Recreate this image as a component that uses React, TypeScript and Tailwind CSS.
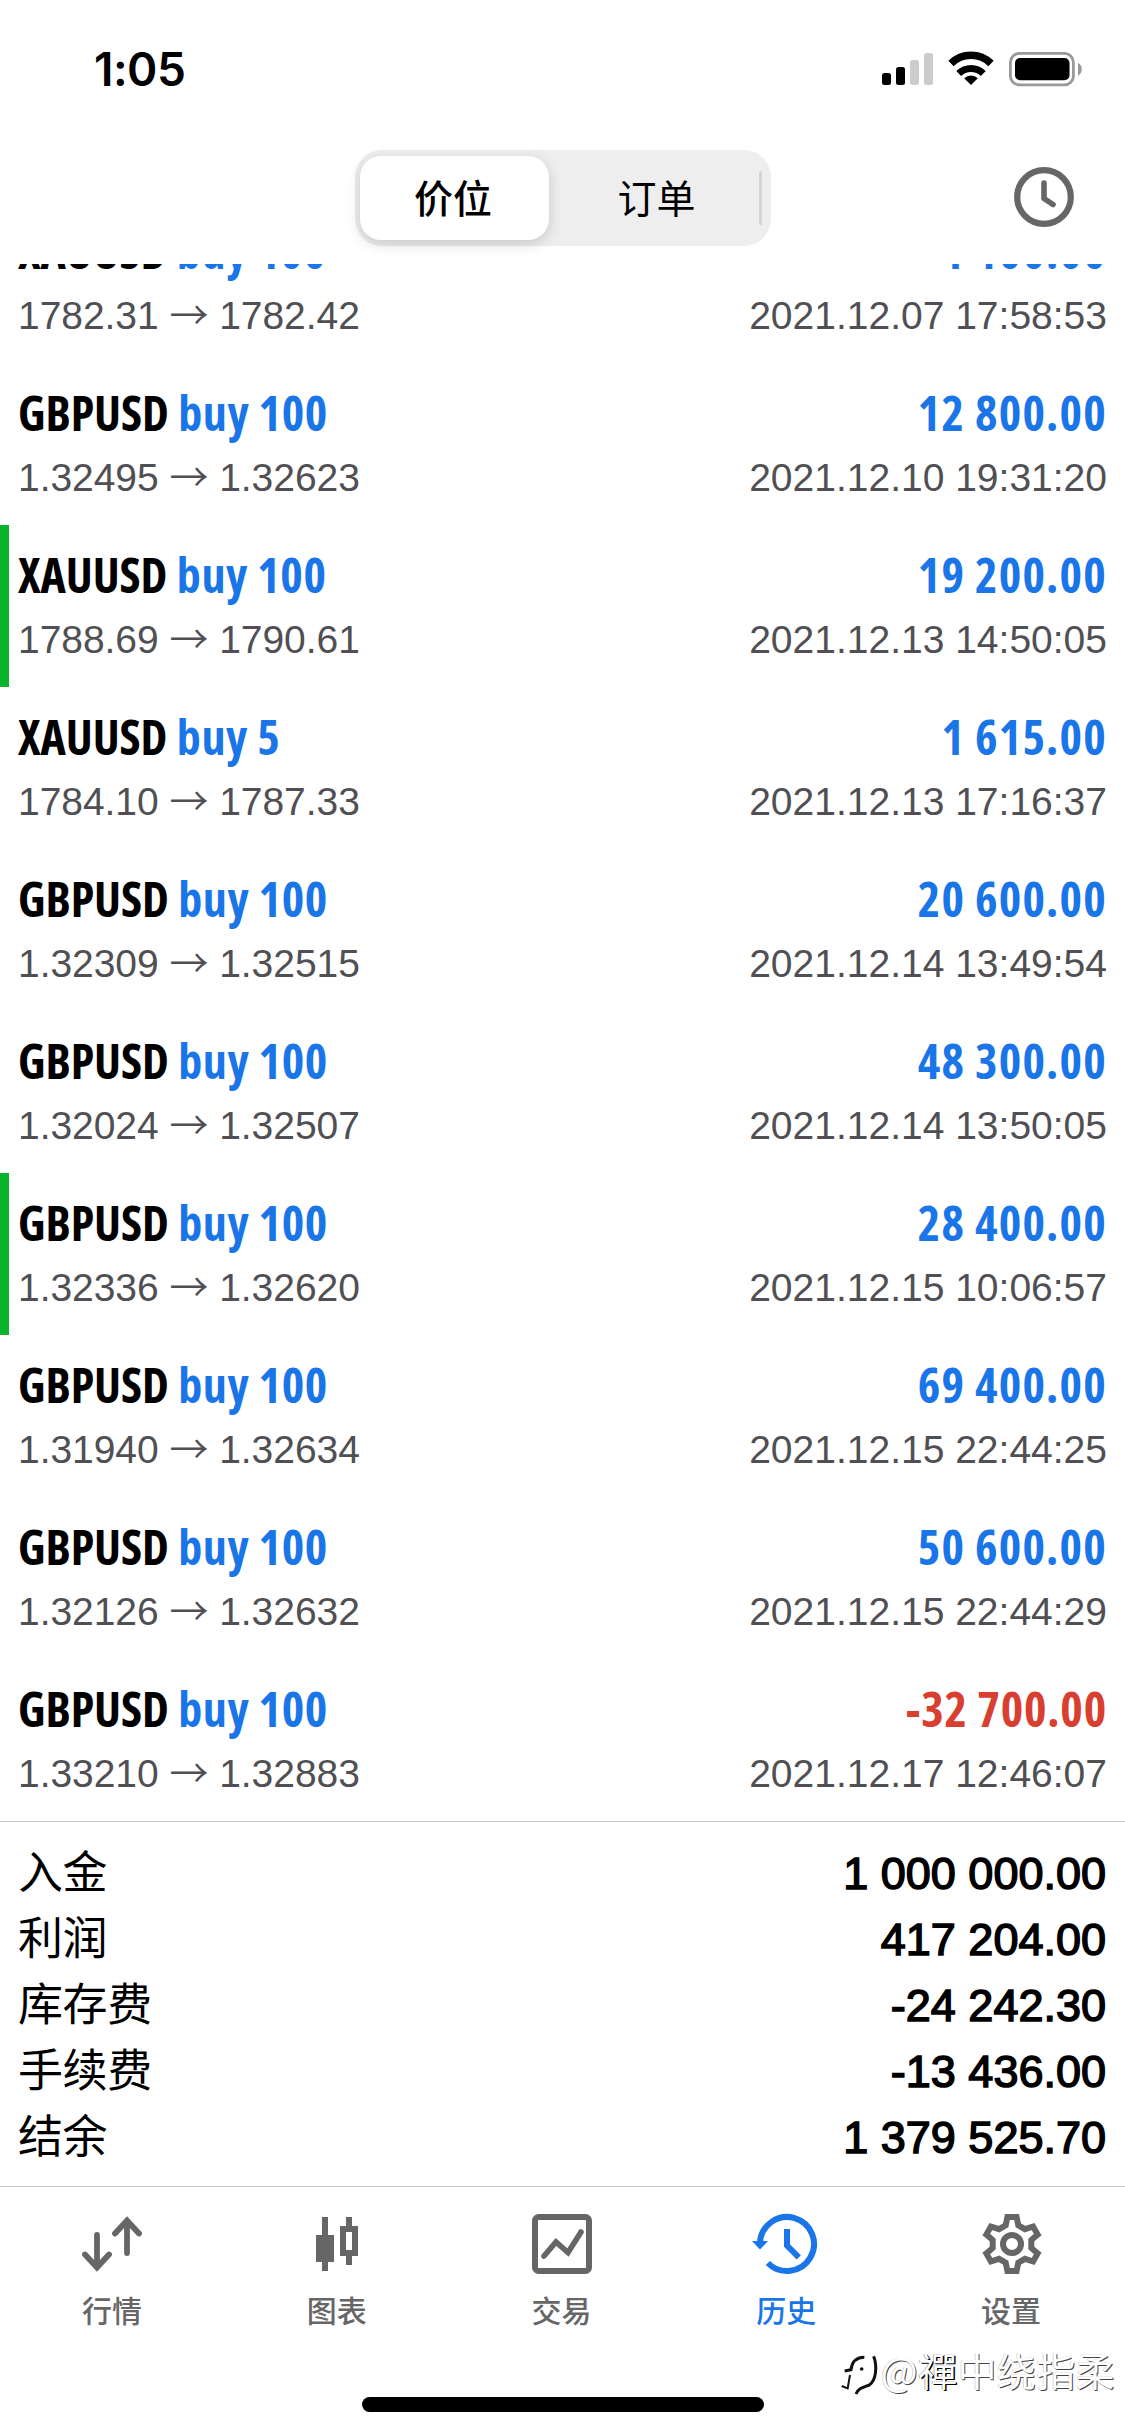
import type { ReactNode } from "react";

type Deal = {
  symbol: string;
  side: string;
  open: string;
  close: string;
  profit: string;
  time: string;
  marked?: boolean;
};

const DEALS: Deal[] = [
  { symbol: "XAUUSD", side: "buy 100", open: "1782.31", close: "1782.42", profit: "1 100.00", time: "2021.12.07 17:58:53" },
  { symbol: "GBPUSD", side: "buy 100", open: "1.32495", close: "1.32623", profit: "12 800.00", time: "2021.12.10 19:31:20" },
  { symbol: "XAUUSD", side: "buy 100", open: "1788.69", close: "1790.61", profit: "19 200.00", time: "2021.12.13 14:50:05", marked: true },
  { symbol: "XAUUSD", side: "buy 5", open: "1784.10", close: "1787.33", profit: "1 615.00", time: "2021.12.13 17:16:37" },
  { symbol: "GBPUSD", side: "buy 100", open: "1.32309", close: "1.32515", profit: "20 600.00", time: "2021.12.14 13:49:54" },
  { symbol: "GBPUSD", side: "buy 100", open: "1.32024", close: "1.32507", profit: "48 300.00", time: "2021.12.14 13:50:05" },
  { symbol: "GBPUSD", side: "buy 100", open: "1.32336", close: "1.32620", profit: "28 400.00", time: "2021.12.15 10:06:57", marked: true },
  { symbol: "GBPUSD", side: "buy 100", open: "1.31940", close: "1.32634", profit: "69 400.00", time: "2021.12.15 22:44:25" },
  { symbol: "GBPUSD", side: "buy 100", open: "1.32126", close: "1.32632", profit: "50 600.00", time: "2021.12.15 22:44:29" },
  { symbol: "GBPUSD", side: "buy 100", open: "1.33210", close: "1.32883", profit: "-32 700.00", time: "2021.12.17 12:46:07" },
];

const SUMMARY = [
  { label: "入金", value: "1 000 000.00" },
  { label: "利润", value: "417 204.00" },
  { label: "库存费", value: "-24 242.30" },
  { label: "手续费", value: "-13 436.00" },
  { label: "结余", value: "1 379 525.70" },
];

function StatusBar() {
  return (
    <div className="flex h-[138px] shrink-0 justify-between pl-[94px] pr-[42px]">
      <span className="pt-[42px] font-['Inter',sans-serif] text-[46px] leading-[54px] font-semibold tracking-[-0.5px] text-black">
        1:05
      </span>
      <svg className="mt-[51px]" width="202" height="36" viewBox="881 51 202 36" fill="none">
        <rect x="882" y="73" width="9" height="12" rx="2.5" fill="#000" />
        <rect x="896" y="67" width="9" height="18" rx="2.5" fill="#000" />
        <rect x="910" y="60" width="9" height="25" rx="2.5" fill="#ccc" />
        <rect x="924" y="53" width="9" height="32" rx="2.5" fill="#ccc" />
        <path d="M951 63.5A28.5 28.5 0 0 1 991 63.5" stroke="#000" strokeWidth="7.5" />
        <path d="M958.7 73.5A17.5 17.5 0 0 1 983.3 73.5" stroke="#000" strokeWidth="7" />
        <path d="M971 85L964.2 78.2A10 10 0 0 1 977.8 78.2Z" fill="#000" />
        <rect x="1010.4" y="53.4" width="63" height="31.5" rx="9" stroke="#999" strokeWidth="2.8" />
        <rect x="1015" y="58" width="54.5" height="22.3" rx="5" fill="#000" />
        <path d="M1078 63C1083 65 1083 73.5 1078 75.5Z" fill="#999" />
      </svg>
    </div>
  );
}

function Header() {
  return (
    <div className="flex h-[126px] shrink-0 items-start justify-between px-[51px] pt-3">
      <div className="w-[60px]" />
      <div className="flex h-24 w-[416px] items-center rounded-[27px] bg-[#eeeeee] p-[6px] pl-[5px] font-['Noto_Sans_CJK_SC',sans-serif] text-[39px] text-black">
        <button className="h-[84px] w-[189px] rounded-[21px] bg-white pr-[2px] pb-[3px] font-medium shadow-[0_4px_14px_rgba(0,0,0,0.16)]">
          价位
        </button>
        <button className="h-[84px] w-[210px] pb-[3px] pl-[6px] font-normal">订单</button>
        <span className="h-[54px] w-[3px] rounded-full bg-[#d4d4d4]" />
      </div>
      <svg className="mt-[17px]" width="60" height="60" viewBox="0 0 60 60" fill="none" stroke="#666" strokeLinecap="round" strokeLinejoin="round">
        <circle cx="30" cy="30" r="26.8" strokeWidth="6.2" />
        <path d="M30 16V31.5L39 37.5" strokeWidth="5.6" />
      </svg>
    </div>
  );
}

function DealRow({ deal }: { deal: Deal }) {
  const loss = deal.profit.startsWith("-");
  return (
    <div className="relative h-[162px] shrink-0 px-[18px] pt-5">
      {deal.marked && <span className="absolute top-0 left-0 h-full w-[9px] bg-[#08b42c]" />}
      <div className="flex justify-between font-['Open_Sans',sans-serif] text-[48px] leading-[60px] font-[660] [font-stretch:75%]">
        <span className="text-black">
          <span className="tracking-[-0.1px]">{deal.symbol}</span>{" "}
          <span className="ml-px tracking-[0.6px] text-[#1a76e8]">{deal.side}</span>
        </span>
        <span className={loss ? "tracking-[0.8px] text-[#d83f31]" : "tracking-[1.2px] text-[#1a76e8]"}>{deal.profit}</span>
      </div>
      <div className="mt-[11px] flex justify-between font-['Liberation_Sans',sans-serif] text-[39px] leading-[48px] text-[#505054]">
        <span className="tracking-[-0.05px]">
          {deal.open} <span className="font-['Noto_Sans_CJK_SC',sans-serif] leading-none font-[350]">→</span> {deal.close}
        </span>
        <span>{deal.time}</span>
      </div>
    </div>
  );
}

function Summary() {
  return (
    <div className="h-[365px] shrink-0 border-t border-[#c8c8c8] pt-[15px] pr-[19px] pl-[18px] text-[45px] leading-[66px] text-black">
      {SUMMARY.map((row) => (
        <div key={row.label} className="flex h-[66px] items-baseline justify-between">
          <span className="font-['Noto_Sans_CJK_SC',sans-serif] tracking-[-0.4px]">{row.label}</span>
          <span className="font-['Liberation_Sans',sans-serif] [-webkit-text-stroke:1.5px_#000]">{row.value}</span>
        </div>
      ))}
    </div>
  );
}

function QuotesIcon() {
  return (
    <svg width="60" height="60" viewBox="0 0 60 60" fill="none" stroke="currentColor" strokeWidth="5.8" strokeLinecap="round" strokeLinejoin="miter">
      <path d="M15 21V53M3 40.5L15 53.5L27 40.5" />
      <path d="M45 39V7M33 19.5L45 6.5L57 19.5" />
    </svg>
  );
}

function ChartIcon() {
  return (
    <svg width="60" height="60" viewBox="0 0 60 60" fill="currentColor">
      <path d="M15 3h6v18h6v27h-6v9h-6v-9H9V21h6z" />
      <path fillRule="evenodd" d="M39 3h6v9h6v30h-6v9h-6v-9h-6V12h6zM39 18v18h6V18z" />
    </svg>
  );
}

function TradeIcon() {
  return (
    <svg width="60" height="60" viewBox="0 0 60 60" fill="none" stroke="currentColor" strokeLinecap="round">
      <rect x="3" y="3" width="54" height="54" rx="3.5" strokeWidth="6" />
      <path d="M12 42L24 28L36 38.5L49 18" strokeWidth="5.6" />
    </svg>
  );
}

function HistoryIcon() {
  return (
    <svg className="overflow-visible" width="60" height="60" viewBox="-30 -30 60 60" fill="none" stroke="currentColor" strokeWidth="6">
      <path d="M-27 -1A27 27 0 1 1 -19.2 19" />
      <path d="M-35 -3H-19L-27 5.5Z" fill="currentColor" stroke="none" />
      <path d="M0 -15V1.5L11.8 13.3" />
    </svg>
  );
}

function SettingsIcon() {
  return (
    <svg width="60" height="60" viewBox="-30 -30 60 60" fill="none" stroke="currentColor" strokeWidth="6">
      <path d="M-6.3 -18.7L-4.6 -27H4.6L6.3 -18.7L13 -14.8L21.1 -17.5L25.7 -9.5L19.3 -3.9V3.9L25.7 9.5L21.1 17.5L13 14.8L6.3 18.7L4.6 27H-4.6L-6.3 18.7L-13 14.8L-21.1 17.5L-25.7 9.5L-19.3 3.9V-3.9L-25.7 -9.5L-21.1 -17.5L-13 -14.8Z" />
      <circle r="9" />
    </svg>
  );
}

const TABS: { label: string; icon: ReactNode; active?: boolean }[] = [
  { label: "行情", icon: <QuotesIcon /> },
  { label: "图表", icon: <ChartIcon /> },
  { label: "交易", icon: <TradeIcon /> },
  { label: "历史", icon: <HistoryIcon />, active: true },
  { label: "设置", icon: <SettingsIcon /> },
];

function TabBar() {
  return (
    <div className="flex h-[250px] shrink-0 flex-col justify-between border-t border-[#c8c8c8] pt-[27px] pb-6">
      <div className="grid grid-cols-5 pr-px">
        {TABS.map((tab) => (
          <button
            key={tab.label}
            className={`flex flex-col items-center gap-[19px] ${tab.active ? "text-[#1a76e8]" : "text-[#666666]"}`}
          >
            {tab.icon}
            <span className="pr-px font-['Noto_Sans_CJK_SC',sans-serif] text-[30px] leading-8 font-medium">{tab.label}</span>
          </button>
        ))}
      </div>
      <div className="mx-auto h-[15px] w-[402px] rounded-full bg-black" />
    </div>
  );
}

function Watermark() {
  return (
    <div className="absolute right-[10px] bottom-[39px] flex items-center">
      <svg className="mt-3" width="40" height="42" viewBox="45 85 120 126" fill="none" stroke="#111">
        <path d="M56 136L75 132C78 108 90 95 115 95" strokeWidth="9" />
        <path d="M72 148L65 188L47 181" strokeWidth="6" />
        <path d="M143 92C154 122 151 164 130 178C112 185 97 187 90 205" strokeWidth="9" />
        <circle cx="107" cy="130" r="5.5" fill="#111" stroke="none" />
      </svg>
      <span className="font-['Noto_Sans_CJK_SC',sans-serif] text-[39px] leading-[56px] tracking-[0.4px] text-white [text-shadow:1px_1px_0_#444,-0.5px_-0.5px_0_#bbb]">
        @<span className="[text-shadow:1.5px_1px_0_#000,-0.5px_-0.5px_0_#777]">禪</span>中绕指柔
      </span>
    </div>
  );
}

export default function App() {
  return (
    <div className="relative flex h-[2436px] w-[1125px] flex-col overflow-hidden bg-white">
      <StatusBar />
      <Header />
      {/* scrolled to the end, the oldest deal is cut by the header */}
      <div className="flex h-[1557px] shrink-0 flex-col justify-end overflow-hidden">
        {DEALS.map((deal) => (
          <DealRow key={deal.time} deal={deal} />
        ))}
      </div>
      <Summary />
      <TabBar />
      <Watermark />
    </div>
  );
}
